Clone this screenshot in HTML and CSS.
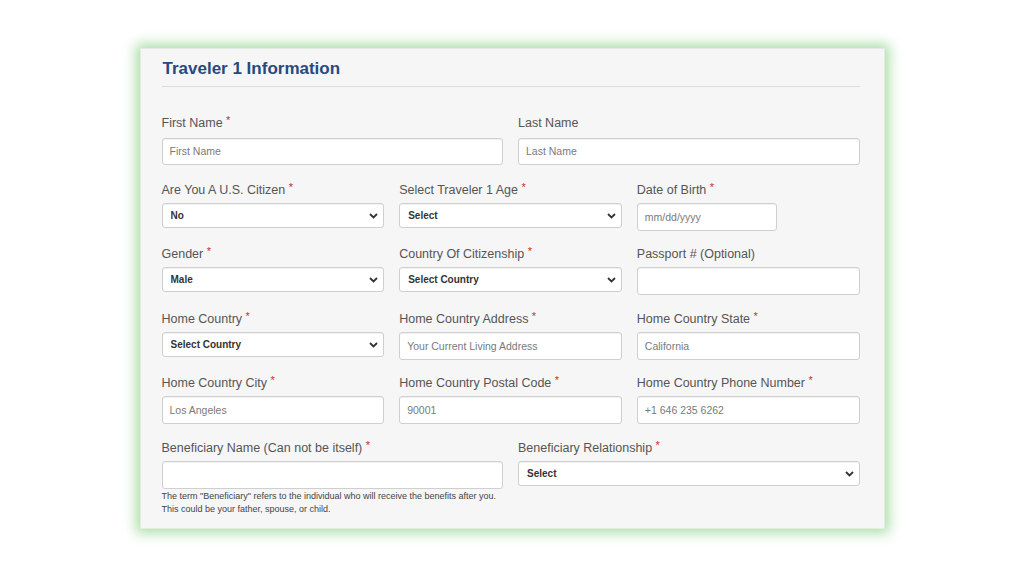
FILE: index.html
```html
<!doctype html>
<html lang="en">
<head>
  <meta charset="utf-8">
  <title>Traveler 1 Information</title>
  <link rel="stylesheet" href="styles.css">
</head>
<body>
  <div class="card">
    <h2 class="title">Traveler 1 Information</h2>
    <form class="form">
      <div class="row row-two row-first">
        <div class="field">
          <label>First Name <span class="req">*</span></label>
          <input type="text" placeholder="First Name">
        </div>
        <div class="field">
          <label>Last Name</label>
          <input type="text" placeholder="Last Name">
        </div>
      </div>

      <div class="row row-three">
        <div class="field">
          <label>Are You A U.S. Citizen <span class="req">*</span></label>
          <div class="select-wrap">
            <select><option>No</option></select>
            <svg class="chevron" width="9" height="6" viewBox="0 0 9 6"><path d="M1 1L4.5 4.5L8 1" fill="none" stroke="#333" stroke-width="1.8"/></svg>
          </div>
        </div>
        <div class="field">
          <label>Select Traveler 1 Age <span class="req">*</span></label>
          <div class="select-wrap">
            <select><option>Select</option></select>
            <svg class="chevron" width="9" height="6" viewBox="0 0 9 6"><path d="M1 1L4.5 4.5L8 1" fill="none" stroke="#333" stroke-width="1.8"/></svg>
          </div>
        </div>
        <div class="field">
          <label>Date of Birth <span class="req">*</span></label>
          <input type="text" class="date" placeholder="mm/dd/yyyy">
        </div>
      </div>

      <div class="row row-three">
        <div class="field">
          <label>Gender <span class="req">*</span></label>
          <div class="select-wrap">
            <select><option>Male</option></select>
            <svg class="chevron" width="9" height="6" viewBox="0 0 9 6"><path d="M1 1L4.5 4.5L8 1" fill="none" stroke="#333" stroke-width="1.8"/></svg>
          </div>
        </div>
        <div class="field">
          <label>Country Of Citizenship <span class="req">*</span></label>
          <div class="select-wrap">
            <select><option>Select Country</option></select>
            <svg class="chevron" width="9" height="6" viewBox="0 0 9 6"><path d="M1 1L4.5 4.5L8 1" fill="none" stroke="#333" stroke-width="1.8"/></svg>
          </div>
        </div>
        <div class="field">
          <label>Passport # (Optional)</label>
          <input type="text">
        </div>
      </div>

      <div class="row row-three">
        <div class="field">
          <label>Home Country <span class="req">*</span></label>
          <div class="select-wrap">
            <select><option>Select Country</option></select>
            <svg class="chevron" width="9" height="6" viewBox="0 0 9 6"><path d="M1 1L4.5 4.5L8 1" fill="none" stroke="#333" stroke-width="1.8"/></svg>
          </div>
        </div>
        <div class="field">
          <label>Home Country Address <span class="req">*</span></label>
          <input type="text" placeholder="Your Current Living Address">
        </div>
        <div class="field">
          <label>Home Country State <span class="req">*</span></label>
          <input type="text" placeholder="California">
        </div>
      </div>

      <div class="row row-three">
        <div class="field">
          <label>Home Country City <span class="req">*</span></label>
          <input type="text" placeholder="Los Angeles">
        </div>
        <div class="field">
          <label>Home Country Postal Code <span class="req">*</span></label>
          <input type="text" placeholder="90001">
        </div>
        <div class="field">
          <label>Home Country Phone Number <span class="req">*</span></label>
          <input type="text" placeholder="+1 646 235 6262">
        </div>
      </div>

      <div class="row row-two">
        <div class="field">
          <label>Beneficiary Name (Can not be itself) <span class="req">*</span></label>
          <input type="text">
          <p class="help">The term "Beneficiary" refers to the individual who will receive the benefits after you.<br>This could be your father, spouse, or child.</p>
        </div>
        <div class="field">
          <label>Beneficiary Relationship <span class="req">*</span></label>
          <div class="select-wrap">
            <select><option>Select</option></select>
            <svg class="chevron" width="9" height="6" viewBox="0 0 9 6"><path d="M1 1L4.5 4.5L8 1" fill="none" stroke="#333" stroke-width="1.8"/></svg>
          </div>
        </div>
      </div>
    </form>
  </div>
</body>
</html>
```
FILE: styles.css
```css
body {
  margin: 0;
  height: 100vh;
  display: flex;
  align-items: center;
  justify-content: center;
  background: #fff;
  font-family: "Liberation Sans", Arial, sans-serif;
}
.card {
  box-sizing: border-box;
  width: 743px;
  height: 479px;
  padding: 10px 24px 12px 21px;
  background: #f6f6f6;
  box-shadow: 0 0 0 1px #e2ece0, 0 0 12px 5px rgba(150, 212, 145, 0.8);
}
.title {
  margin: 0;
  padding: 0 0 7px 1px;
  font-size: 17px;
  line-height: 20px;
  font-weight: bold;
  color: #274a7d;
  border-bottom: 1px solid #dcdcdc;
}
.form {
  margin-top: 28.5px;
  display: flex;
  flex-direction: column;
  gap: 15.5px;
}
.row {
  display: grid;
  gap: 15px;
  align-items: start;
}
.row-first {
  margin-bottom: 1.5px;
}
.row-two {
  grid-template-columns: 1fr 1fr;
}
.row-three {
  grid-template-columns: 1fr 1fr 1fr;
}
.field {
  display: flex;
  flex-direction: column;
  align-items: stretch;
}
.field label {
  font-size: 12.5px;
  line-height: 16px;
  color: #555;
  margin-bottom: 5px;
}
.row-first .field label {
  margin-bottom: 6.5px;
}
.req {
  color: #c9302c;
  font-size: 11px;
  position: relative;
  top: -3px;
}
.field input,
.field select {
  box-sizing: border-box;
  width: 100%;
  margin: 0;
  background: #fff;
  border: 1px solid #cfcfcf;
  border-radius: 3px;
  box-shadow: inset 0 1px 1px rgba(0, 0, 0, 0.06);
  font-family: "Liberation Sans", Arial, sans-serif;
  outline: none;
}
.field input {
  height: 28px;
  padding: 0 7px;
  font-size: 10.5px;
  color: #555;
}
.row-first .field input {
  height: 27px;
}
.field input::placeholder {
  color: #7a7a7a;
}
.field input.date {
  width: 140px;
}
.select-wrap {
  position: relative;
}
.field select {
  -webkit-appearance: none;
  appearance: none;
  height: 25px;
  padding: 0 20px 0 8px;
  font-size: 10px;
  font-weight: bold;
  color: #333;
}
.chevron {
  position: absolute;
  right: 6px;
  top: 10px;
  pointer-events: none;
}
.help {
  margin: 1px 0 0;
  font-size: 9px;
  line-height: 13px;
  color: #444;
}
```
